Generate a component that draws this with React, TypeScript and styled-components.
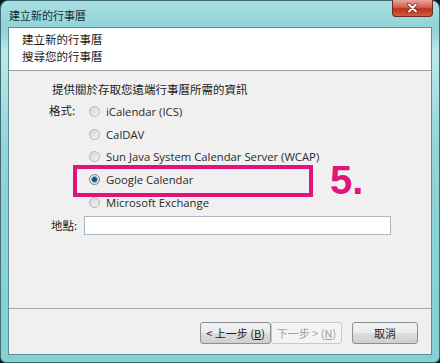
import React from "react";
import styled, { createGlobalStyle } from "styled-components";

const Global = createGlobalStyle`
  html, body { margin: 0; padding: 0; background: #0c1a22; }
  body { width: 440px; height: 363px; overflow: hidden; }
`;

const CJK = `"Noto Sans CJK TC", "Noto Sans CJK SC", sans-serif`;
const LATIN = `"Open Sans", "Noto Sans CJK TC", sans-serif`;

const Frame = styled.div`
  width: 440px;
  height: 363px;
  box-sizing: border-box;
  border-radius: 8px 8px 6px 6px;
  background: linear-gradient(180deg, #a9dfe2 0%, #8fd3d7 8%, #bfe9ea 14%, #92d4d8 40%, #86cfd3 100%);
  border: 1px solid #3d6e74;
  display: flex;
  flex-direction: column;
  padding: 0 7px 7px 7px;
`;

const TitleBar = styled.div`
  height: 26px;
  display: flex;
  align-items: flex-start;
  justify-content: space-between;
`;

const TitleText = styled.div`
  font-family: ${CJK};
  font-size: 11px;
  color: #1b2a2e;
  padding-top: 6px;
  padding-left: 1px;
`;

const CloseBtn = styled.div`
  width: 41px;
  height: 17px;
  margin-top: -1px;
  margin-right: -1px;
  border: 1px solid #6b2a22;
  border-top: none;
  border-radius: 0 0 4px 4px;
  background: linear-gradient(180deg, #e9a59a 0%, #d8604e 45%, #c0301c 55%, #d05a40 100%);
  display: flex;
  align-items: center;
  justify-content: center;
  box-sizing: border-box;
`;

const Client = styled.div`
  flex: 1;
  display: flex;
  flex-direction: column;
  border: 1px solid #5a8f94;
  background: #f0f0f0;
`;

const Header = styled.div`
  height: 43px;
  background: #ffffff;
  border-bottom: 1px solid #a0a0a0;
  padding: 3px 0 0 13px;
  box-sizing: border-box;
  font-family: ${CJK};
  font-size: 11.5px;
  line-height: 17px;
  color: #1a1a1a;
`;

const Body = styled.div`
  flex: 1;
  padding: 10px 0 0 40px;
  position: relative;
  font-family: ${CJK};
  font-size: 11.5px;
  color: #222;
`;

const Intro = styled.div`
  padding-left: 3px;
  line-height: 16px;
`;

const FormatRow = styled.div`
  display: grid;
  grid-template-columns: 40px 1fr;
  margin-top: 3px;
`;

const FieldLabel = styled.div`
  font-family: ${CJK};
  line-height: 20px;
`;

const Options = styled.div`
  display: flex;
  flex-direction: column;
`;

const Option = styled.div`
  display: flex;
  align-items: center;
  height: 22.7px;
  gap: 6px;
  font-family: ${LATIN};
  font-size: 11.3px;
  color: #2a2a2a;
`;

const Radio = styled.span<{ $checked?: boolean }>`
  width: 9px;
  height: 9px;
  border-radius: 50%;
  border: 1px solid ${(p) => (p.$checked ? "#6a7f8e" : "#b5b5b5")};
  background: ${(p) =>
    p.$checked
      ? "radial-gradient(circle, #0f3e66 0%, #2a6f9e 40%, #e8eef2 55%, #dde3e8 100%)"
      : "linear-gradient(135deg, #d6d6d6, #f4f4f4)"};
  flex: none;
`;

const Highlight = styled.div`
  position: absolute;
  left: 64px;
  top: 94px;
  width: 240px;
  height: 32px;
  box-sizing: border-box;
  border: 4px solid #e0147a;
`;

const Step = styled.div`
  position: absolute;
  left: 321px;
  top: 85px;
  font-family: "Liberation Sans", Arial, sans-serif;
  font-weight: bold;
  font-size: 40px;
  line-height: 48px;
  color: #e0147a;
`;

const LocationRow = styled.div`
  display: flex;
  align-items: center;
  gap: 7px;
  margin-top: 2px;
  margin-left: 2px;
`;

const TextBox = styled.div`
  width: 307px;
  height: 19px;
  box-sizing: border-box;
  background: #fff;
  border: 1px solid #a9b6c4;
`;

const Footer = styled.div`
  border-top: 1px solid #a8a8a8;
  height: 46px;
  box-sizing: border-box;
  display: flex;
  align-items: center;
  justify-content: flex-end;
  padding: 0 13px 0 0;
`;

const Btn = styled.div<{ $disabled?: boolean; $gapLeft?: number; $w: number }>`
  width: ${(p) => p.$w}px;
  height: 22px;
  box-sizing: border-box;
  margin-left: ${(p) => p.$gapLeft ?? 0}px;
  border: 1px solid ${(p) => (p.$disabled ? "#c8c8c8" : "#8e8f8f")};
  border-radius: 3px;
  background: ${(p) =>
    p.$disabled
      ? "#f4f4f4"
      : "linear-gradient(180deg, #f2f2f2 0%, #ebebeb 48%, #dddddd 52%, #cfcfcf 100%)"};
  color: ${(p) => (p.$disabled ? "#a0a0a0" : "#1a1a1a")};
  font-family: ${CJK};
  font-size: 11px;
  display: flex;
  align-items: center;
  justify-content: center;
  margin-top: 2px;
`;

const U = styled.span`
  text-decoration: underline;
`;

export default function App() {
  return (
    <>
      <Global />
      <Frame>
        <TitleBar>
          <TitleText>建立新的行事曆</TitleText>
          <CloseBtn>
            <svg width="11" height="10" viewBox="0 0 11 10">
              <path d="M2 1.5 L9 8.5 M9 1.5 L2 8.5" stroke="#6a1a10" strokeWidth="3.2" strokeLinecap="round" />
              <path d="M2 1.5 L9 8.5 M9 1.5 L2 8.5" stroke="#ffffff" strokeWidth="1.9" strokeLinecap="round" />
            </svg>
          </CloseBtn>
        </TitleBar>
        <Client>
          <Header>
            <div>建立新的行事曆</div>
            <div>搜尋您的行事曆</div>
          </Header>
          <Body>
            <Intro>提供關於存取您遠端行事曆所需的資訊</Intro>
            <FormatRow>
              <FieldLabel>格式:</FieldLabel>
              <Options>
                <Option><Radio />iCalendar (ICS)</Option>
                <Option><Radio />CalDAV</Option>
                <Option><Radio />Sun Java System Calendar Server (WCAP)</Option>
                <Option><Radio $checked />Google Calendar</Option>
                <Option><Radio />Microsoft Exchange</Option>
              </Options>
            </FormatRow>
            <LocationRow>
              <FieldLabel>地點:</FieldLabel>
              <TextBox />
            </LocationRow>
            <Highlight />
            <Step>5.</Step>
          </Body>
          <Footer>
            <Btn $w={71}>&lt; 上一步 (<U>B</U>)</Btn>
            <Btn $w={71} $disabled>下一步 &gt; (<U>N</U>)</Btn>
            <Btn $w={66} $gapLeft={10}>取消</Btn>
          </Footer>
        </Client>
      </Frame>
    </>
  );
}
